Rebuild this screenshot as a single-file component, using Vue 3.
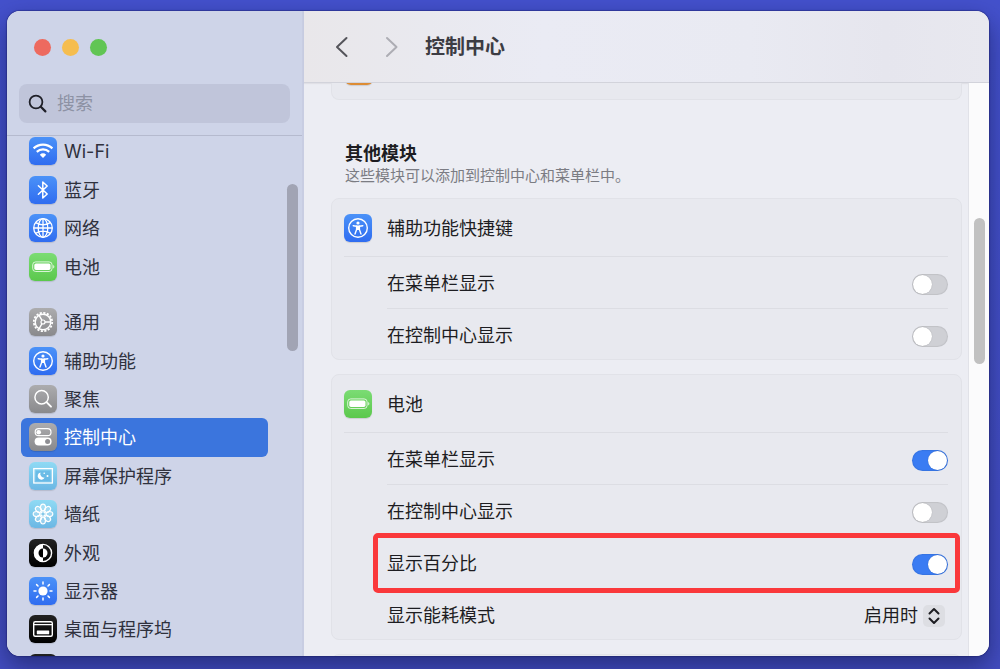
<script setup>
import { ref } from 'vue';

const search = ref('');
const current = ref('control');

const groups = [
    {
        name: 'network',
        items: [
            { id: 'wifi', label: 'Wi-Fi', color: 'blue' },
            { id: 'bluetooth', label: '蓝牙', color: 'blue' },
            { id: 'globe', label: '网络', color: 'blue' },
            { id: 'battery', label: '电池', color: 'green' },
        ],
    },
    {
        name: 'system',
        items: [
            { id: 'gear', label: '通用', color: 'gray' },
            { id: 'access', label: '辅助功能', color: 'blue' },
            { id: 'spotlight', label: '聚焦', color: 'gray' },
            { id: 'control', label: '控制中心', color: 'gray' },
            { id: 'saver', label: '屏幕保护程序', color: 'cyan' },
            { id: 'flower', label: '墙纸', color: 'cyan' },
            { id: 'appearance', label: '外观', color: 'black' },
            { id: 'sun', label: '显示器', color: 'blue' },
            { id: 'dock', label: '桌面与程序坞', color: 'black' },
            { id: 'siri', label: '', color: 'black' },
        ],
    },
];

const petals = [0, 45, 90, 135, 180, 225, 270, 315];

const modules = ref([
    {
        id: 'access',
        title: '辅助功能快捷键',
        color: 'blue',
        rows: [
            { id: 'menubar', label: '在菜单栏显示', on: false },
            { id: 'center', label: '在控制中心显示', on: false },
        ],
    },
    {
        id: 'battery',
        title: '电池',
        color: 'green',
        rows: [
            { id: 'menubar', label: '在菜单栏显示', on: true },
            { id: 'center', label: '在控制中心显示', on: false },
            { id: 'percent', label: '显示百分比', on: true, marked: true },
            { id: 'energy', label: '显示能耗模式', value: '启用时', options: ['启用时', '始终', '永不'] },
        ],
    },
]);
</script>

<template>
    <svg class="sprite" aria-hidden="true">
        <symbol id="icon-wifi" viewBox="0 0 28 28">
            <g fill="none" stroke="#fff" stroke-width="2.2">
                <path d="M4.6 11.4a13.4 13.4 0 0 1 18.8 0" />
                <path d="M7.8 14.9a8.9 8.9 0 0 1 12.4 0" />
            </g>
            <path fill="#fff" d="M10.8 17.8a4.8 4.8 0 0 1 6.4 0L14 21z" />
        </symbol>
        <symbol id="icon-bluetooth" viewBox="0 0 28 28">
            <path d="M9.4 9.8l8.8 8.2-4.4 4V6l4.4 4-8.8 8.2" fill="none" stroke="#fff" stroke-width="1.5" stroke-linejoin="round" stroke-linecap="round" />
        </symbol>
        <symbol id="icon-globe" viewBox="0 0 28 28">
            <g fill="none" stroke="#fff" stroke-width="1.3">
                <circle cx="14" cy="14" r="9.3" />
                <ellipse cx="14" cy="14" rx="4.8" ry="9.3" />
                <path d="M14 4.7v18.6M4.7 14h18.6M6.6 8.6c4.4 2.6 10.4 2.6 14.8 0M6.6 19.4c4.4-2.6 10.4-2.6 14.8 0" />
            </g>
        </symbol>
        <symbol id="icon-battery" viewBox="0 0 28 28">
            <rect x="3.7" y="8.9" width="19.4" height="9.6" rx="3" fill="none" stroke="#fff" stroke-opacity="0.75" stroke-width="1" />
            <rect x="5.3" y="10.4" width="16.2" height="6.6" rx="1.7" fill="#fff" />
            <path d="M24.2 12v3.4c1.6-.6 1.6-2.8 0-3.4z" fill="#fff" fill-opacity="0.8" />
        </symbol>
        <symbol id="icon-gear" viewBox="0 0 28 28">
            <g fill="none" stroke="#fff">
                <circle cx="14" cy="14" r="9.2" stroke-width="1.8" stroke-dasharray="2.2 1.41" />
                <circle cx="14" cy="14" r="7.8" stroke-width="1.4" />
                <circle cx="14" cy="14" r="2" stroke-width="1.2" />
                <path d="M16 14h6M13 12.3L10 7.2M13 15.7L10 20.8" stroke-width="1.4" />
            </g>
        </symbol>
        <symbol id="icon-access" viewBox="0 0 28 28">
            <circle cx="14" cy="14" r="9.3" fill="none" stroke="#fff" stroke-width="1.4" />
            <circle cx="14" cy="9" r="1.6" fill="#fff" />
            <path d="M9.2 11.7l3.4.5v3.4L11 20M18.8 11.7l-3.4.5v3.4L17 20" fill="none" stroke="#fff" stroke-width="1.4" stroke-linecap="round" stroke-linejoin="round" />
            <path d="M12 11.6h4v4.4h-4z" fill="#fff" />
        </symbol>
        <symbol id="icon-spotlight" viewBox="0 0 28 28">
            <g fill="none" stroke="#fff" stroke-linecap="round">
                <circle cx="12.6" cy="12.2" r="6.7" stroke-width="1.5" />
                <path d="M17.5 17.2l4.5 4.5" stroke-width="1.9" />
            </g>
        </symbol>
        <symbol id="icon-control" viewBox="0 0 28 28">
            <rect x="6.2" y="5.7" width="15.8" height="7" rx="3.5" fill="none" stroke="#fff" stroke-width="1.2" />
            <circle cx="9.7" cy="9.2" r="2.3" fill="#fff" />
            <rect x="5.6" y="14.6" width="17" height="8" rx="4" fill="#fff" />
            <circle cx="18.6" cy="18.6" r="2.5" fill="#8e8e93" />
        </symbol>
        <symbol id="icon-saver" viewBox="0 0 28 28">
            <rect x="4.8" y="6.6" width="18.6" height="14.4" fill="none" stroke="#fff" stroke-width="1.3" />
            <rect x="6.8" y="8.6" width="14.6" height="10.4" fill="#5db3e2" fill-opacity="0.6" />
            <path d="M11.5 10.4a3.7 3.7 0 1 0 4.2 5.2 3.9 3.9 0 0 1-4.2-5.2z" fill="#fff" />
            <circle cx="15.2" cy="11.2" r="0.8" fill="#fff" />
            <circle cx="18.5" cy="14" r="1" fill="#fff" />
        </symbol>
        <symbol id="icon-flower" viewBox="0 0 28 28">
            <g fill="#fff" fill-opacity="0.25" stroke="#fff" stroke-width="1.2">
                <ellipse v-for="angle in petals" :key="angle" cx="14" cy="7.6" rx="2.5" ry="3.4"
                    :transform="`rotate(${angle} 14 14)`" />
            </g>
            <path d="M14 10v8M10 14h8M11.2 11.2l5.6 5.6M16.8 11.2l-5.6 5.6" stroke="#fff" stroke-width="1" />
            <circle cx="14" cy="14" r="1" fill="#5fb6e0" />
        </symbol>
        <symbol id="icon-appearance" viewBox="0 0 28 28">
            <circle cx="14" cy="14" r="8.6" fill="none" stroke="#fff" stroke-width="1.4" />
            <path d="M14 5a9 9 0 0 0 0 18z" fill="#fff" />
            <path d="M14 9.5a4.5 4.5 0 0 0 0 9z" fill="#000" />
            <path d="M14 9.5a4.5 4.5 0 0 1 0 9z" fill="#fff" />
        </symbol>
        <symbol id="icon-sun" viewBox="0 0 28 28">
            <circle cx="14" cy="14" r="4.6" fill="#fff" />
            <path d="M14 5v2M14 21v2M5 14h2M21 14h2M7.6 7.6L9 9M19 19l1.4 1.4M7.6 20.4L9 19M19 9l1.4-1.4" stroke="#fff" stroke-width="1.5" stroke-linecap="round" />
        </symbol>
        <symbol id="icon-dock" viewBox="0 0 28 28">
            <rect x="4.7" y="6.7" width="18.6" height="14.6" rx="1.5" fill="none" stroke="#fff" stroke-width="1.4" />
            <path d="M5 9.7h18" stroke="#fff" stroke-width="1.2" />
            <rect x="7.8" y="15.6" width="12.4" height="3.6" rx="0.5" fill="#fff" />
        </symbol>
        <symbol id="icon-siri" viewBox="0 0 28 28">
            <circle cx="14" cy="14" r="8" fill="none" stroke="#fff" stroke-width="1.4" />
        </symbol>
    </svg>

    <div class="desktop">
        <div class="window">
            <aside class="sidebar">
                <div class="sidebar__lights">
                    <button class="light light--close" aria-label="关闭"></button>
                    <button class="light light--min" aria-label="最小化"></button>
                    <button class="light light--max" aria-label="缩放"></button>
                </div>
                <label class="search">
                    <svg class="search__icon" viewBox="0 0 20 20" fill="none" stroke="#1f2028" stroke-linecap="round">
                        <circle cx="8" cy="8" r="6.4" stroke-width="1.8" />
                        <path d="M12.8 12.8l4.6 4.6" stroke-width="2.2" />
                    </svg>
                    <input v-model="search" class="search__input" type="text" placeholder="搜索" aria-label="搜索">
                </label>
                <div class="sidebar__scroll">
                    <nav class="menu">
                        <div v-for="group in groups" :key="group.name" class="menu__group" :class="`menu__group--${group.name}`">
                            <a v-for="item in group.items" :key="item.id" href="#" class="menu__item"
                                :class="{ 'menu__item--active': item.id === current }" @click.prevent="current = item.id">
                                <svg class="icon" :class="`icon--${item.color}`"><use :href="`#icon-${item.id}`" /></svg>
                                <span class="menu__label">{{ item.label }}</span>
                            </a>
                        </div>
                    </nav>
                    <div class="thumb thumb--sidebar"></div>
                </div>
            </aside>

            <main class="main">
                <header class="toolbar">
                    <button class="toolbar__nav" aria-label="后退">
                        <svg viewBox="0 0 14 22"><path d="M11.5 2L2 11l9.5 9" /></svg>
                    </button>
                    <button class="toolbar__nav toolbar__nav--off" aria-label="前进" disabled>
                        <svg viewBox="0 0 14 22"><path d="M2 2l9.5 9L2 20" /></svg>
                    </button>
                    <h1 class="toolbar__title">控制中心</h1>
                </header>
                <div class="body">
                    <div class="content">
                        <div class="card card--above">
                            <div class="icon icon--orange"></div>
                        </div>
                        <h2 class="content__title">其他模块</h2>
                        <p class="content__hint">这些模块可以添加到控制中心和菜单栏中。</p>
                        <section v-for="mod in modules" :key="mod.id" class="card">
                            <div class="card__head">
                                <svg class="icon" :class="`icon--${mod.color}`"><use :href="`#icon-${mod.id}`" /></svg>
                                <h3 class="card__title">{{ mod.title }}</h3>
                            </div>
                            <div v-for="row in mod.rows" :key="row.id" class="row" :class="{ 'row--marked': row.marked }">
                                <label :for="`${mod.id}-${row.id}`">{{ row.label }}</label>
                                <div v-if="row.options" class="picker">
                                    <select :id="`${mod.id}-${row.id}`" v-model="row.value" class="picker__select">
                                        <option v-for="option in row.options" :key="option">{{ option }}</option>
                                    </select>
                                    <svg class="picker__arrows" viewBox="0 0 22 22">
                                        <path d="M6.5 8.5L11 4l4.5 4.5M6.5 13.5L11 18l4.5-4.5" />
                                    </svg>
                                </div>
                                <input v-else :id="`${mod.id}-${row.id}`" v-model="row.on" class="switch" type="checkbox">
                            </div>
                        </section>
                        <section class="card card--below"></section>
                    </div>
                    <div class="track">
                        <div class="thumb thumb--main"></div>
                    </div>
                </div>
            </main>
        </div>
    </div>
</template>

<style>
body {
    margin: 0;
    overflow: hidden;
}
</style>

<style scoped>
* {
    box-sizing: border-box;
}

.sprite {
    display: none;
}

.desktop {
    display: flex;
    height: 100vh;
    padding: 11px 11px 13px 7px;
    background: linear-gradient(#4451cc, #434dc0);
    color: #1d1d22;
    font-family: Inter, "Noto Sans CJK SC", sans-serif;
    font-size: 18px;
    line-height: 24px;
}

.window {
    display: flex;
    flex: 1;
    min-width: 0;
    overflow: hidden;
    border-radius: 13px;
    background: #ecedf3;
    box-shadow: 0 0 1px 1px rgba(20, 20, 90, 0.35), 0 10px 24px rgba(10, 15, 60, 0.5);
}

.sidebar {
    display: flex;
    flex-direction: column;
    flex: none;
    width: 297px;
    border-right: 2px solid #c8cde2;
    background: #ced4e8;
}

.sidebar__lights {
    display: flex;
    gap: 11px;
    padding: 28px 27px;
}

.light {
    width: 17px;
    height: 17px;
    padding: 0;
    border: 0;
    border-radius: 50%;
}

.light--close {
    background: #ed6a5f;
}

.light--min {
    background: #f5bd4f;
}

.light--max {
    background: #61c554;
}

.search {
    display: flex;
    align-items: center;
    gap: 9px;
    height: 39px;
    margin: 0 12px 12px;
    padding: 0 9px;
    border-radius: 8px;
    background: #c0c5da;
}

.search__icon {
    flex: none;
    width: 20px;
    height: 20px;
}

.search__input {
    flex: 1;
    min-width: 0;
    padding: 0;
    border: 0;
    outline: none;
    background: none;
    color: inherit;
    font: inherit;
}

.search__input::placeholder {
    color: #8d92a4;
    opacity: 1;
}

.sidebar__scroll {
    display: flex;
    flex: 1;
    min-height: 0;
    overflow: hidden;
    padding: 0 4px 0 14px;
    border-top: 1px solid #b5bace;
}

.menu {
    flex: 1;
    margin-top: -4px;
    color: #2f313d;
}

.menu__group {
    display: grid;
    grid-auto-rows: 1fr;
}

.menu__group--network {
    height: 154px;
    margin-bottom: 17px;
}

.menu__group--system {
    height: 384px;
}

.menu__item {
    display: flex;
    align-items: center;
    gap: 7px;
    padding: 0 8px;
    border-radius: 6px;
    color: inherit;
    text-decoration: none;
}

.menu__item--active {
    background: #3b75dd;
    color: #fff;
}

.menu__label {
    padding-top: 2px;
}

.icon {
    flex: none;
    width: 28px;
    height: 28px;
    border-radius: 6px;
    box-shadow: 0 1px 1px rgba(0, 0, 0, 0.12);
}

.icon--blue {
    background: linear-gradient(#4b92f8, #2f6cf0);
}

.icon--green {
    background: linear-gradient(#7bdc74, #5bc84c);
}

.icon--gray {
    background: linear-gradient(#acacae, #89898c);
}

.icon--cyan {
    background: linear-gradient(#8fdaf4, #6bb7e4);
}

.icon--black {
    background: linear-gradient(#222, #000);
}

.icon--orange {
    background: #dd8c34;
}

.thumb {
    flex: none;
    width: 11px;
    border-radius: 6px;
}

.thumb--sidebar {
    height: 167px;
    margin: 48px 0 0 19px;
    background: #a1a4b4;
}

.thumb--main {
    height: 146px;
    background: #c1c1c1;
}

.main {
    display: flex;
    flex-direction: column;
    flex: 1;
    min-width: 0;
}

.toolbar {
    display: flex;
    align-items: center;
    flex: none;
    height: 72px;
    padding: 0 31px;
    border-bottom: 1px solid #d2d3db;
    background: linear-gradient(90deg, #e9e7ea, #e9e9ef 18%, #eaebf4 35%, #e9eaf2 65%, #e6e6ee 85%, #e8e8ef);
    box-shadow: 0 1px 1px rgba(0, 0, 0, 0.05);
}

.toolbar__nav {
    width: 14px;
    height: 22px;
    margin-right: 36px;
    padding: 0;
    border: 0;
    background: none;
}

.toolbar__nav svg {
    display: block;
    fill: none;
    stroke: #55555b;
    stroke-width: 2;
    stroke-linecap: round;
    stroke-linejoin: round;
}

.toolbar__nav--off {
    margin-right: 26px;
}

.toolbar__nav--off svg {
    stroke: #adadb4;
}

.toolbar__title {
    margin: 0;
    color: #3c3c43;
    font-size: 20px;
    font-weight: 700;
}

.body {
    display: flex;
    flex: 1;
    min-height: 0;
}

.content {
    flex: 1;
    min-width: 0;
    overflow: hidden;
    padding: 0 6px 0 27px;
    border-right: 1px solid #e1e2e8;
}

.content__title {
    margin: 42px 14px 0;
    font-size: 18px;
    font-weight: 700;
}

.content__hint {
    margin: 0 14px 12px;
    color: #7b7c83;
    font-size: 15px;
    line-height: 20px;
}

.card {
    margin-bottom: 14px;
    padding: 0 13px 0 12px;
    border: 1px solid #e1e2e8;
    border-radius: 8px;
    background: #e8e9ef;
}

/* scrolled under the toolbar, only its bottom edge shows */
.card--above {
    display: flex;
    align-items: flex-start;
    height: 17px;
    margin-bottom: 0;
    border-top: 0;
    border-radius: 0 0 8px 8px;
}

.card--above .icon {
    margin: -26px 0 0 1px;
}

.card--below {
    height: 20px;
}

.card__head {
    display: flex;
    align-items: center;
    gap: 15px;
    height: 58px;
    border-bottom: 1px solid #dcdde3;
}

.card__title {
    margin: 0;
    padding-top: 2px;
    font-size: 18px;
    font-weight: 400;
}

.row {
    display: flex;
    align-items: center;
    justify-content: space-between;
    height: 52px;
    margin-left: 43px;
    padding-top: 3px;
    border-bottom: 1px solid #dcdde3;
}

.row:last-child {
    height: 50px;
    padding-top: 4px;
    border-bottom: 0;
}

.row--marked {
    position: relative;
}

.row--marked::after {
    content: "";
    position: absolute;
    inset: -4px -12px -5px -14px;
    border: 5px solid #fa383b;
    border-radius: 5px;
    pointer-events: none;
}

.switch {
    appearance: none;
    flex: none;
    width: 36px;
    height: 21px;
    margin: 0;
    padding: 1px;
    border-radius: 11px;
    background: #cfd0d5;
    box-shadow: inset 0 0 1px 1px rgba(0, 0, 0, 0.07);
}

.switch::before {
    content: "";
    display: block;
    width: 19px;
    height: 19px;
    border-radius: 50%;
    background: #fff;
    box-shadow: 0 0 1px rgba(0, 0, 0, 0.3);
}

.switch:checked {
    background: #3a7cf3;
}

.switch:checked::before {
    margin-left: auto;
}

.picker {
    position: relative;
    margin-right: 3px;
}

.picker__select {
    appearance: none;
    display: block;
    height: 24px;
    padding: 0 27px 0 0;
    border: 0;
    outline: none;
    background: none;
    color: inherit;
    font: inherit;
}

.picker__arrows {
    position: absolute;
    top: 1px;
    right: 0;
    width: 22px;
    height: 22px;
    border-radius: 5px;
    background: #dddee3;
    fill: none;
    stroke: #1d1d22;
    stroke-width: 2;
    stroke-linecap: round;
    stroke-linejoin: round;
    pointer-events: none;
}

.track {
    flex: none;
    width: 20px;
    padding: 135px 0 0 5px;
    background: #fbfbfc;
}
</style>
